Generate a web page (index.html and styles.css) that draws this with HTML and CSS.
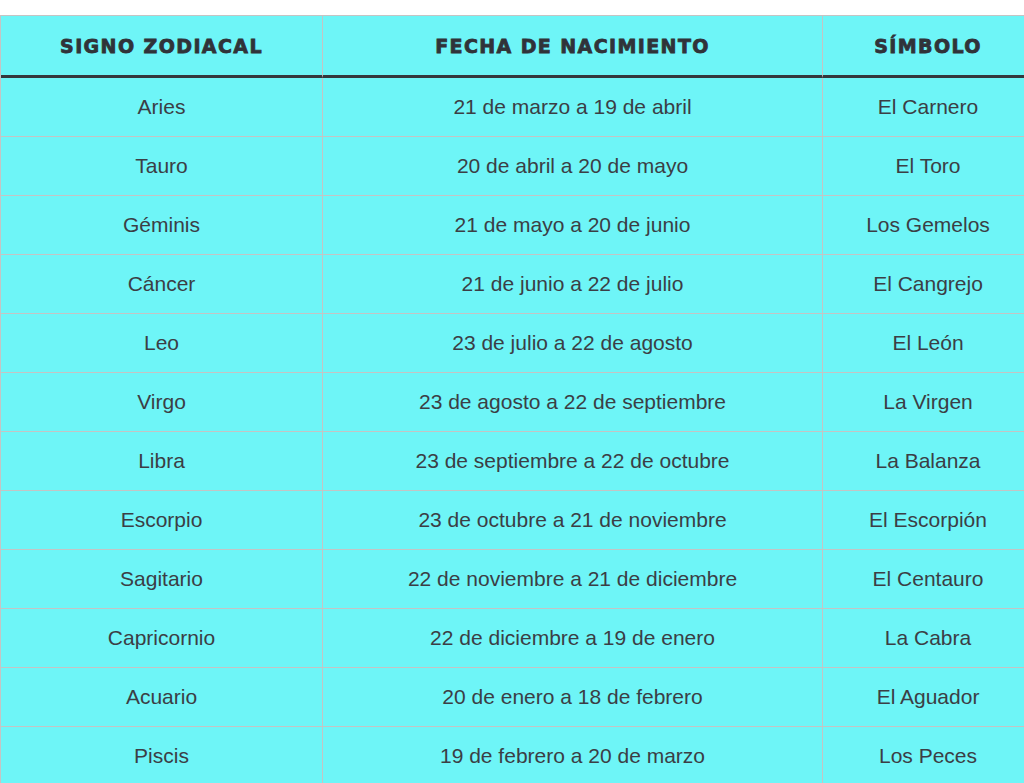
FILE: index.html
```html
<!DOCTYPE html>
<html lang="es">
<head>
<meta charset="utf-8">
<title>Signos zodiacales</title>
<link rel="stylesheet" href="styles.css">
</head>
<body>
<table class="zodiac">
  <thead>
    <tr>
      <th class="c1">SIGNO ZODIACAL</th>
      <th class="c2">FECHA DE NACIMIENTO</th>
      <th class="c3">SÍMBOLO</th>
    </tr>
  </thead>
  <tbody>
    <tr><td>Aries</td><td>21 de marzo a 19 de abril</td><td>El Carnero</td></tr>
    <tr><td>Tauro</td><td>20 de abril a 20 de mayo</td><td>El Toro</td></tr>
    <tr><td>Géminis</td><td>21 de mayo a 20 de junio</td><td>Los Gemelos</td></tr>
    <tr><td>Cáncer</td><td>21 de junio a 22 de julio</td><td>El Cangrejo</td></tr>
    <tr><td>Leo</td><td>23 de julio a 22 de agosto</td><td>El León</td></tr>
    <tr><td>Virgo</td><td>23 de agosto a 22 de septiembre</td><td>La Virgen</td></tr>
    <tr><td>Libra</td><td>23 de septiembre a 22 de octubre</td><td>La Balanza</td></tr>
    <tr><td>Escorpio</td><td>23 de octubre a 21 de noviembre</td><td>El Escorpión</td></tr>
    <tr><td>Sagitario</td><td>22 de noviembre a 21 de diciembre</td><td>El Centauro</td></tr>
    <tr><td>Capricornio</td><td>22 de diciembre a 19 de enero</td><td>La Cabra</td></tr>
    <tr><td>Acuario</td><td>20 de enero a 18 de febrero</td><td>El Aguador</td></tr>
    <tr><td>Piscis</td><td>19 de febrero a 20 de marzo</td><td>Los Peces</td></tr>
  </tbody>
</table>
</body>
</html>
```
FILE: styles.css
```css
html, body {
  margin: 0;
  padding: 0;
  background: #ffffff;
  overflow: hidden;
}
body {
  padding-top: 15px;
}
.zodiac {
  border-collapse: separate;
  border-spacing: 0;
  width: 1034px;
  table-layout: fixed;
  background: #6ef5f7;
  color: #3b3e45;
  font-family: "Liberation Sans", Arial, sans-serif;
  font-size: 21px;
  border-top: 1px solid #c4c4c4;
  border-left: 1px solid #c4c4c4;
}
.zodiac th, .zodiac td {
  border-right: 1px solid #c4c4c4;
  border-bottom: 1px solid #c4c4c4;
  text-align: center;
  padding: 0;
}
.zodiac th {
  height: 59px;
  font-family: "DejaVu Sans", "Liberation Sans", sans-serif;
  font-weight: bold;
  font-size: 19px;
  letter-spacing: 1.4px;
  -webkit-text-stroke: 0.8px #303339;
  border-bottom: 3px solid #34373c;
  color: #303339;
}
.zodiac .c1 { width: 321px; }
.zodiac .c2 { width: 499px; }
.zodiac td {
  height: 58px;
}
```
